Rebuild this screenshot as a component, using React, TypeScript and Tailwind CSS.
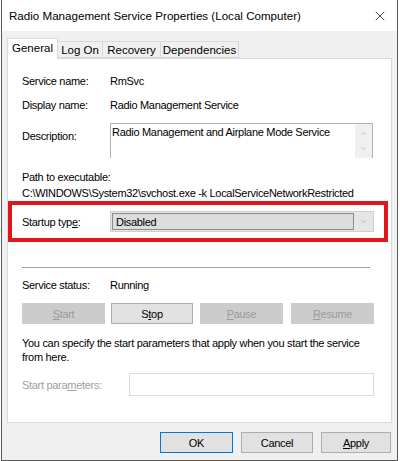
import { X, ChevronDown, ChevronUp } from 'lucide-react';

const font = { fontFamily: '"Liberation Sans", Arial, sans-serif' };

function Tab({ label, active, w }: { label: string; active?: boolean; w: string }) {
  return active ? (
    <div className={`relative z-10 -mb-px flex h-[21px] items-center justify-center border border-b-0 border-[#d9d9d9] bg-white pb-[2px] text-[11.5px] text-black ${w}`}>
      {label}
    </div>
  ) : (
    <div className={`-ml-px flex h-[17px] items-center justify-center border border-[#d9d9d9] bg-[#f0f0f0] text-[11.5px] text-black ${w}`}>
      {label}
    </div>
  );
}

function Row({ label, value }: { label: string; value: string }) {
  return (
    <div className="flex h-[24px] items-center">
      <div className="w-[88px]">{label}</div>
      <div>{value}</div>
    </div>
  );
}

function SvcButton({ children, enabled }: { children: React.ReactNode; enabled?: boolean }) {
  return (
    <div
      className={
        enabled
          ? 'flex h-[21px] w-[82px] items-center justify-center border border-[#adadad] bg-[#e1e1e1] text-black'
          : 'flex h-[21px] w-[83px] items-center justify-center border border-[#cccccc] bg-[#cccccc] text-[#9a9a9a]'
      }
    >
      {children}
    </div>
  );
}

function DlgButton({ children, primary, w }: { children: React.ReactNode; primary?: boolean; w: string }) {
  return (
    <div
      className={`flex h-[21px] items-center justify-center bg-[#e1e1e1] text-black ${w} ${
        primary ? 'border border-[#0078d7]' : 'border border-[#adadad]'
      }`}
    >
      {children}
    </div>
  );
}

export default function App() {
  return (
    <div className="h-[461px] w-[400px] bg-white text-[11px] leading-[14px] tracking-[-0.3px] text-black" style={font}>
      <div className="ml-px flex h-[461px] w-[397px] flex-col border-x border-b border-[#5a5a5a] bg-[#f0f0f0]">
        {/* title bar */}
        <div className="flex h-[31px] items-center justify-between bg-white pl-[7px] pr-[8px]">
          <span className="text-[11.6px] tracking-normal text-black">Radio Management Service Properties (Local Computer)</span>
          <X size={16} strokeWidth={1} className="mr-[1px] text-black" />
        </div>

        {/* tabs */}
        <div className="flex h-[27px] items-end pl-[5px] tracking-normal">
          <Tab label="General" active w="w-[51px]" />
          <Tab label="Log On" w="w-[46px]" />
          <Tab label="Recovery" w="w-[59px]" />
          <Tab label="Dependencies" w="w-[79px]" />
        </div>

        {/* panel */}
        <div className="ml-[5px] h-[365px] w-[385px] border border-[#d9d9d9] bg-white pl-[14px] pt-[10px]">
          <Row label="Service name:" value="RmSvc" />
          <Row label="Display name:" value="Radio Management Service" />

          <div className="mt-[6px] flex h-[35px]">
            <div className="flex w-[88px] items-start pt-[6px]">Description:</div>
            <div className="flex w-[263px] border-x border-t border-[#b3b3b3]">
              <div className="flex-1 pl-[1px] pt-[1px]">Radio Management and Airplane Mode Service</div>
              <div className="flex w-[17px] flex-col items-center justify-between bg-[#f0f0f0] py-[5px]">
                <ChevronUp size={9} strokeWidth={1.5} className="text-[#a8a8a8]" />
                <ChevronDown size={9} strokeWidth={1.5} className="text-[#a8a8a8]" />
              </div>
            </div>
          </div>

          <div className="mt-[12px]">Path to executable:</div>
          <div className="mt-[2px] whitespace-nowrap">C:\WINDOWS\System32\svchost.exe -k LocalServiceNetworkRestricted</div>

          {/* highlighted startup type */}
          <div className="-ml-[14px] mt-px flex h-[41px] w-[380px] items-center border-[4px] border-[#e0161f] pl-[10px]">
            <div className="w-[88px]">
              Startup typ<span className="underline">e</span>:
            </div>
            <div className="flex h-[21px] w-[264px] items-center border border-[#cfcfcf] bg-[#e6e6e6] p-px">
              <div className="flex h-full w-[242px] items-center border border-[#8c8c8c] bg-[#dddddd] pl-[3px]">
                Disabled
              </div>
              <div className="flex flex-1 justify-center">
                <ChevronDown size={9} strokeWidth={1.5} className="text-[#909090]" />
              </div>
            </div>
          </div>

          <div className="mr-[21px] mt-[25px] h-px bg-[#a0a0a0]" />

          <div className="mt-[9px] flex h-[16px] items-center">
            <div className="w-[88px]">Service status:</div>
            <div>Running</div>
          </div>

          <div className="mt-[10px] flex gap-[6px]">
            <SvcButton>
              <span className="underline">S</span>tart
            </SvcButton>
            <SvcButton enabled>
              S<span className="underline">t</span>op
            </SvcButton>
            <div className="ml-[1px]">
              <SvcButton>
                <span className="underline">P</span>ause
              </SvcButton>
            </div>
            <div className="ml-[2px]">
              <SvcButton>
                <span className="underline">R</span>esume
              </SvcButton>
            </div>
          </div>

          <div className="mt-[12px] w-[352px] leading-[14px]">
            You can specify the start parameters that apply when you start the service from here.
          </div>

          <div className="mt-[9px] flex h-[23px] items-center">
            <div className="w-[107px] text-[#a0a0a0]">
              Start para<span className="underline">m</span>eters:
            </div>
            <div className="h-[23px] w-[245px] border border-[#dadada] bg-white" />
          </div>
        </div>

        {/* dialog buttons */}
        <div className="mt-[9px] flex gap-[8px] pl-[158px]">
          <DlgButton primary w="w-[73px]">OK</DlgButton>
          <DlgButton w="w-[72px]">Cancel</DlgButton>
          <DlgButton w="w-[70px]">
            <span className="underline">A</span>pply
          </DlgButton>
        </div>
      </div>
    </div>
  );
}
